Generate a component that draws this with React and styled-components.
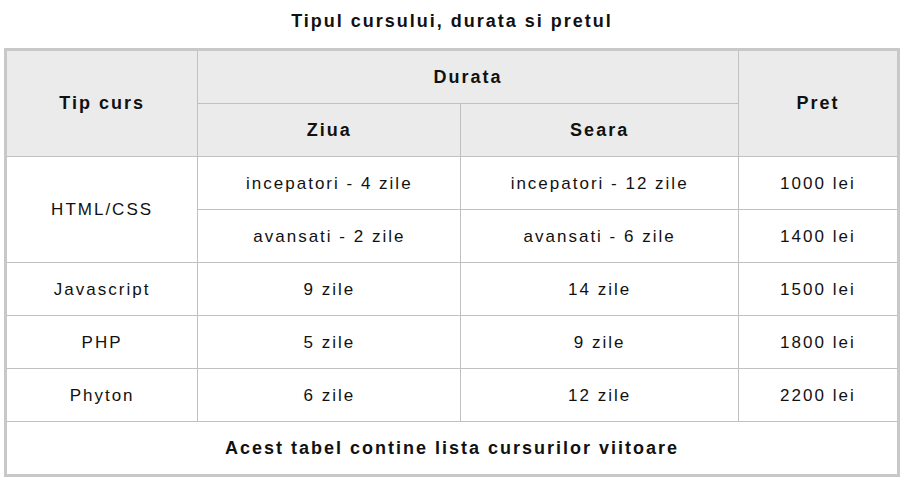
import React from 'react';
import styled, { createGlobalStyle } from 'styled-components';

const GlobalStyle = createGlobalStyle`
  html, body {
    margin: 0;
    padding: 0;
    background: #fff;
  }
  body {
    font-family: "Liberation Sans", Arial, sans-serif;
    color: #111;
  }
`;

const Page = styled.div`
  padding: 0 7px 0 4px;
`;

const Table = styled.table`
  width: 896px;
  border-collapse: collapse;
  border: 3px solid #c8c8c8;
  letter-spacing: 2px;
  text-align: center;
`;

const Caption = styled.caption`
  font-size: 18px;
  font-weight: bold;
  height: 48px;
  line-height: 42px;
  caption-side: top;
`;

const Th = styled.th`
  background: #ebebeb;
  border: 1px solid #c0c0c0;
  font-size: 18px;
  font-weight: bold;
  height: 52px;
  padding: 0;
`;

const Td = styled.td`
  border: 1px solid #c0c0c0;
  font-size: 17px;
  color: #111;
  height: 51px;
  padding: 1px 0 0;
  font-weight: ${(p) => (p.$bold ? 'bold' : 'normal')};
  ${(p) => p.$bold && 'font-size: 18px; height: 52px; padding: 0;'}
`;

const rows = [
  { tip: 'Javascript', ziua: '9 zile', seara: '14 zile', pret: '1500 lei' },
  { tip: 'PHP', ziua: '5 zile', seara: '9 zile', pret: '1800 lei' },
  { tip: 'Phyton', ziua: '6 zile', seara: '12 zile', pret: '2200 lei' },
];

export default function App() {
  return (
    <Page>
      <GlobalStyle />
      <Table>
        <Caption>Tipul cursului, durata si pretul</Caption>
        <colgroup>
          <col style={{ width: 192 }} />
          <col style={{ width: 263 }} />
          <col style={{ width: 277 }} />
          <col style={{ width: 160 }} />
        </colgroup>
        <thead>
          <tr>
            <Th rowSpan={2}>Tip curs</Th>
            <Th colSpan={2}>Durata</Th>
            <Th rowSpan={2}>Pret</Th>
          </tr>
          <tr>
            <Th>Ziua</Th>
            <Th>Seara</Th>
          </tr>
        </thead>
        <tbody>
          <tr>
            <Td rowSpan={2}>HTML/CSS</Td>
            <Td>incepatori - 4 zile</Td>
            <Td>incepatori - 12 zile</Td>
            <Td>1000 lei</Td>
          </tr>
          <tr>
            <Td>avansati - 2 zile</Td>
            <Td>avansati - 6 zile</Td>
            <Td>1400 lei</Td>
          </tr>
          {rows.map((r) => (
            <tr key={r.tip}>
              <Td>{r.tip}</Td>
              <Td>{r.ziua}</Td>
              <Td>{r.seara}</Td>
              <Td>{r.pret}</Td>
            </tr>
          ))}
        </tbody>
        <tfoot>
          <tr>
            <Td $bold colSpan={4}>Acest tabel contine lista cursurilor viitoare</Td>
          </tr>
        </tfoot>
      </Table>
    </Page>
  );
}
